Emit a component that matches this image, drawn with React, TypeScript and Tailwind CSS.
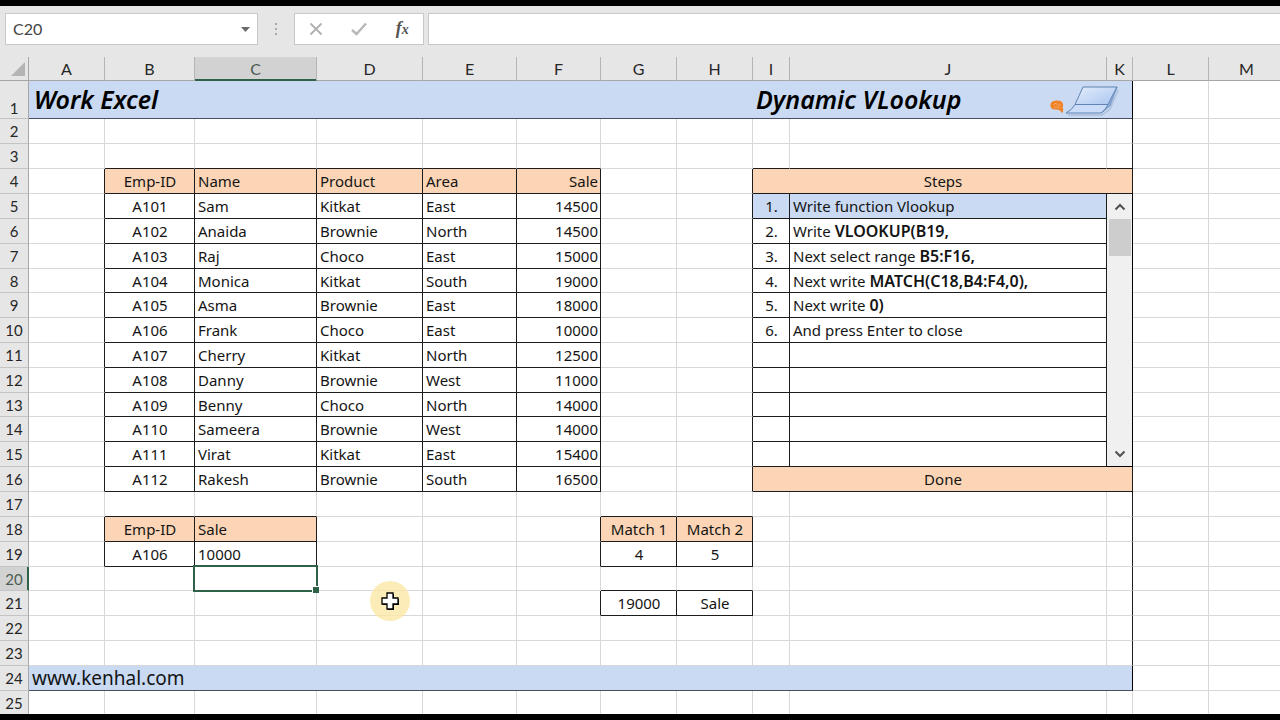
import type { ReactNode } from 'react';
import { clsx } from 'clsx';

const COLS = [
  { id: 'A', w: 'w-[76px]' },
  { id: 'B', w: 'w-[90px]' },
  { id: 'C', w: 'w-[122px]' },
  { id: 'D', w: 'w-[106px]' },
  { id: 'E', w: 'w-[94px]' },
  { id: 'F', w: 'w-[84px]' },
  { id: 'G', w: 'w-[76px]' },
  { id: 'H', w: 'w-[76px]' },
  { id: 'I', w: 'w-[37px]' },
  { id: 'J', w: 'w-[317px]' },
  { id: 'K', w: 'w-[26px]' },
  { id: 'L', w: 'w-[76px]' },
  { id: 'M', w: '' },
];

const EMPLOYEES = [
  ['A101', 'Sam', 'Kitkat', 'East', '14500'],
  ['A102', 'Anaida', 'Brownie', 'North', '14500'],
  ['A103', 'Raj', 'Choco', 'East', '15000'],
  ['A104', 'Monica', 'Kitkat', 'South', '19000'],
  ['A105', 'Asma', 'Brownie', 'East', '18000'],
  ['A106', 'Frank', 'Choco', 'East', '10000'],
  ['A107', 'Cherry', 'Kitkat', 'North', '12500'],
  ['A108', 'Danny', 'Brownie', 'West', '11000'],
  ['A109', 'Benny', 'Choco', 'North', '14000'],
  ['A110', 'Sameera', 'Brownie', 'West', '14000'],
  ['A111', 'Virat', 'Kitkat', 'East', '15400'],
  ['A112', 'Rakesh', 'Brownie', 'South', '16500'],
];

const Code = ({ children }: { children: ReactNode }) => (
  <b className="text-base leading-5 font-semibold">{children}</b>
);

const STEPS: ReactNode[] = [
  'Write function Vlookup',
  <>Write <Code>VLOOKUP(B19,</Code></>,
  <>Next select range <Code>B5:F16,</Code></>,
  <>Next write <Code>MATCH(C18,B4:F4,0),</Code></>,
  <>Next write <Code>0)</Code></>,
  'And press Enter to close',
];

// cell address -> content
const VALUES: Record<string, ReactNode> = {
  B18: 'Emp-ID', C18: 'Sale', B19: 'A106', C19: '10000',
  G18: 'Match 1', H18: 'Match 2', G19: '4', H19: '5', G21: '19000', H21: 'Sale',
  I4: 'Steps', I16: 'Done',
};
['Emp-ID', 'Name', 'Product', 'Area', 'Sale'].forEach((h, i) => { VALUES['BCDEF'[i] + 4] = h; });
EMPLOYEES.forEach((row, r) => row.forEach((v, i) => { VALUES['BCDEF'[i] + (r + 5)] = v; }));
STEPS.forEach((s, i) => { VALUES[`I${i + 5}`] = `${i + 1}.`; VALUES[`J${i + 5}`] = s; });

// bordered blocks: first column, first row, last column, last row (columns are indexes)
const BLOCKS = [[1, 4, 5, 16], [1, 18, 2, 19], [6, 18, 7, 19], [6, 21, 7, 21], [8, 4, 10, 16]];
const boxed = (c: number, r: number) => BLOCKS.some(([c1, r1, c2, r2]) => c >= c1 && c <= c2 && r >= r1 && r <= r2);

const fill = (id: string, r: number) => {
  if (r === 4 && 'BCDEFI'.includes(id)) return 'bg-[#fbd5b5]';
  if (r === 16 && id === 'I') return 'bg-[#fbd5b5]';
  if (r === 18 && 'BCGH'.includes(id)) return 'bg-[#fbd5b5]';
  if (r === 5 && 'IJ'.includes(id)) return 'bg-[#c9daf2]';
  return 'bg-white';
};

const align = (id: string) => {
  if ('BGHI'.includes(id)) return 'text-center';
  return id === 'F' ? 'text-right' : 'text-left';
};

const Laptop = () => (
  <svg viewBox="1048 83 72 34" className="h-[34px] w-[72px]" aria-hidden="true">
    <defs>
      <linearGradient id="lid" x1="0" y1="0" x2="1" y2="1">
        <stop offset="0" stopColor="#e4edfc" />
        <stop offset="1" stopColor="#a9c5f0" />
      </linearGradient>
    </defs>
    <path d="M1068 115 H1102 L1110 109 L1118 90" fill="none" stroke="#8fa3c4" strokeWidth="1.500" opacity="0.5" />
    <path d="M1083 87 H1117 L1108 104.500 H1075 Z" fill="url(#lid)" stroke="#5f83b3" strokeWidth="1" />
    <path d="M1075 104.500 H1108 Q1106 110 1101 113 H1066 Q1072 110 1075 104.500 Z" fill="#cbdcf8" stroke="#5f83b3" strokeWidth="1" />
    <path d="M1117 87 L1110 106 L1101 113 Q1106 110 1108 104.500 Z" fill="#8eaddb" stroke="#5f83b3" strokeWidth="0.600" />
    <path d="M1050.500 105.500 C1050 101.500 1054 100.500 1057.500 100.500 C1062 100.500 1064.500 104 1062.500 107.500 C1064 110 1063 112.500 1061.500 113 C1061 110.500 1059 109.500 1056 109.500 C1052 109.500 1050.500 108 1050.500 105.500 Z" fill="#f08228" />
    <path d="M1053 105 Q1055 102 1057 104 T1061 105 M1054 107.500 Q1057 106 1060 108" fill="none" stroke="#f9b070" strokeWidth="0.800" />
  </svg>
);

const ScrollBar = () => (
  <div className="flex h-[272px] flex-col items-center bg-[#f0f0f0]">
    <button aria-label="Scroll up" className="flex h-[25px] w-full items-center justify-center">
      <svg viewBox="0 0 12 8" className="h-2 w-3"><path d="M1.500 6.500 L6 2 L10.500 6.500" fill="none" stroke="#505050" strokeWidth="2" /></svg>
    </button>
    <div className="h-[37px] w-[22px] bg-[#cdcdcd]" />
    <button aria-label="Scroll down" className="mt-auto flex h-[25px] w-full items-center justify-center">
      <svg viewBox="0 0 12 8" className="h-2 w-3"><path d="M1.500 1.500 L6 6 L10.500 1.500" fill="none" stroke="#505050" strokeWidth="2" /></svg>
    </button>
  </div>
);

const Selection = () => (
  <div className="pointer-events-none absolute -top-[2px] -right-[2px] -bottom-[2px] -left-[2px] z-10 border-2 border-[#2f6149]">
    <div className="absolute -right-[3px] -bottom-[3px] h-[7px] w-[7px] border-t border-l border-white bg-[#2f6149]" />
  </div>
);

const Pointer = () => (
  <div className="pointer-events-none absolute top-[14px] left-[53px] z-20 flex h-10 w-10 items-center justify-center rounded-full bg-[#fbe8a6]/80">
    <svg viewBox="0 0 20 20" className="h-5 w-5">
      <path d="M8 3 H14 V8 H19 V14 H14 V19 H8 V14 H3 V8 H8 Z" fill="#000" />
      <path d="M7 2 H13 V7 H18 V13 H13 V18 H7 V13 H2 V7 H7 Z" fill="#fff" stroke="#000" strokeWidth="1.300" />
    </svg>
  </div>
);

const Cell = ({ c, r }: { c: number; r: number }) => {
  const { id } = COLS[c];
  const key = `${id}${r}`;
  const merged = id === 'I' && (r === 4 || r === 16);
  const last = merged ? 10 : c;
  const dark = boxed(c, r);
  return (
    <td
      colSpan={merged ? 3 : 1}
      className={clsx(
        'relative border-r border-b p-0 pr-[2px] pl-[3px] whitespace-nowrap',
        fill(id, r),
        align(id),
        dark || boxed(c, r + 1) ? 'border-b-[#1c1c1c]' : 'border-b-[#d8d8d8]',
        dark || last === 10 || boxed(last + 1, r) ? 'border-r-[#1c1c1c]' : 'border-r-[#d8d8d8]',
      )}
    >
      {VALUES[key]}
      {key === 'C20' && <Selection />}
      {key === 'D20' && <Pointer />}
    </td>
  );
};

const Blank = () => <td className="border-r border-b border-[#d8d8d8] bg-white p-0" />;

const RowCells = ({ r }: { r: number }) => {
  if (r === 1) {
    return (
      <>
        <td colSpan={8} className="border-b border-[#46505e] bg-[#c9daf2] p-0 pb-[2px] pl-[5px] text-[25px] leading-8 font-semibold text-black italic">
          Work Excel
        </td>
        <td colSpan={3} className="border-r border-b border-r-black border-b-[#46505e] bg-[#c9daf2] p-0 pr-3 pl-[3px]">
          <div className="flex h-9 items-center justify-between">
            <span className="pb-[2px] text-[25px] leading-8 font-semibold text-black italic">Dynamic VLookup</span>
            <Laptop />
          </div>
        </td>
        <Blank /><Blank />
      </>
    );
  }
  if (r === 24) {
    return (
      <>
        <td colSpan={11} className="border-r border-b border-r-black border-b-[#46505e] bg-[#c9daf2] p-0 pl-[3px] text-[19px] leading-6">
          <a href="#site">www.kenhal.com</a>
        </td>
        <Blank /><Blank />
      </>
    );
  }
  return (
    <>
      {COLS.map(({ id }, c) => {
        if ((r === 4 || r === 16) && (id === 'J' || id === 'K')) return null;
        if (id === 'K' && r >= 5 && r <= 15) {
          return r === 5 ? (
            <td key={id} rowSpan={11} className="border-r border-b border-black bg-[#f0f0f0] p-0"><ScrollBar /></td>
          ) : null;
        }
        // the sheet's right edge stops at row 24
        if (r === 25) return <Blank key={id} />;
        return <Cell key={id} c={c} r={r} />;
      })}
    </>
  );
};

const rowHeight = (r: number) => {
  if (r === 1) return 'h-[38px]';
  return r === 8 || r === 13 || r === 20 ? 'h-[24px]' : 'h-[25px]';
};

const FormulaBar = () => (
  <div className="flex h-[51px] shrink-0 items-start pt-[7px] pl-[5px] font-['Lato',sans-serif]">
    <div className="flex h-[32px] w-[253px] items-center border border-[#c8c8c8] bg-white">
      <input aria-label="Name Box" defaultValue="C20" className="min-w-0 flex-1 bg-transparent pl-[7px] text-base text-[#444] outline-none" />
      <button aria-label="Open name list" className="flex h-full w-6 items-center justify-center">
        <svg viewBox="0 0 9 5" className="h-[5px] w-[9px]"><path d="M0 0 H9 L4.500 5 Z" fill="#6a6a6a" /></svg>
      </button>
    </div>
    <svg viewBox="0 0 4 14" className="mt-[9px] mr-[16px] ml-[16px] h-[14px] w-1" aria-hidden="true">
      <path d="M1 1 H3 V3 H1 Z M1 6 H3 V8 H1 Z M1 11 H3 V13 H1 Z" fill="#a8a8a8" />
    </svg>
    <div className="flex h-[32px] w-[130px] items-center justify-around border border-[#c8c8c8] bg-white">
      <button aria-label="Cancel">
        <svg viewBox="0 0 14 14" className="h-[14px] w-[14px]"><path d="M1.500 1.500 L12.500 12.500 M12.500 1.500 L1.500 12.500" stroke="#b0b0b0" strokeWidth="1.800" /></svg>
      </button>
      <button aria-label="Enter">
        <svg viewBox="0 0 16 14" className="h-[14px] w-4"><path d="M1 8 L5.500 12 L15 1.500" fill="none" stroke="#b8b8b8" strokeWidth="2.400" /></svg>
      </button>
      <button aria-label="Insert Function" className="font-['Liberation_Serif',serif] text-lg leading-5 font-bold text-[#555] italic">
        f<span className="text-sm">x</span>
      </button>
    </div>
    <input aria-label="Formula Bar" className="ml-1 h-[32px] min-w-0 flex-1 border border-r-0 border-[#c8c8c8] bg-white px-2 outline-none" />
  </div>
);

const Sheet = () => (
  <div className="min-h-0 flex-1 overflow-hidden bg-white">
    <table className="w-full min-w-[1285px] table-fixed border-separate border-spacing-0 font-['Noto_Sans','Open_Sans',sans-serif] text-[15px] leading-5 text-[#141414]">
      <colgroup>
        <col className="w-[29px]" />
        {COLS.map(({ id, w }) => <col key={id} className={w} />)}
      </colgroup>
      <thead className="font-['Lato',sans-serif] text-base leading-5 text-[#262626]">
        <tr className="h-[24px]">
          <th aria-label="Select all" className="border-r border-b border-[#a6a6a6] bg-[#e6e6e6] p-0">
            <svg viewBox="0 0 14 14" className="ml-[11px] h-[14px] w-[14px]"><path d="M14 0 V14 H0 Z" fill="#b4b4b4" /></svg>
          </th>
          {COLS.map(({ id }) => (
            <th
              key={id}
              className={clsx(
                'border-r border-b border-r-[#b4b4b4] p-0 font-normal',
                id === 'C' ? 'border-b-[#2f6149] bg-[#d2d2d2] text-[#4d5a52] shadow-[inset_0_-1px_0_#2f6149]' : 'border-b-[#a6a6a6] bg-[#e6e6e6]',
              )}
            >
              {id}
            </th>
          ))}
        </tr>
      </thead>
      <tbody>
        {Array.from({ length: 25 }, (_, i) => i + 1).map(r => (
          <tr key={r} className={rowHeight(r)}>
            <th
              className={clsx(
                "border-r border-b border-b-[#c4c4c4] p-0 font-['Lato',sans-serif] text-[15px] leading-5 font-normal",
                r === 1 && 'align-bottom',
                r === 20 ? 'border-r-[#2f6149] bg-[#d2d2d2] text-[#4d5a52] shadow-[inset_-1px_0_0_#2f6149]' : 'border-r-[#a6a6a6] bg-[#e6e6e6] text-[#262626]',
              )}
            >
              {r}
            </th>
            <RowCells r={r} />
          </tr>
        ))}
      </tbody>
    </table>
  </div>
);

export default function App() {
  return (
    <div className="flex h-screen flex-col overflow-hidden border-y-[6px] border-black bg-[#e6e6e6]">
      <FormulaBar />
      <Sheet />
    </div>
  );
}
